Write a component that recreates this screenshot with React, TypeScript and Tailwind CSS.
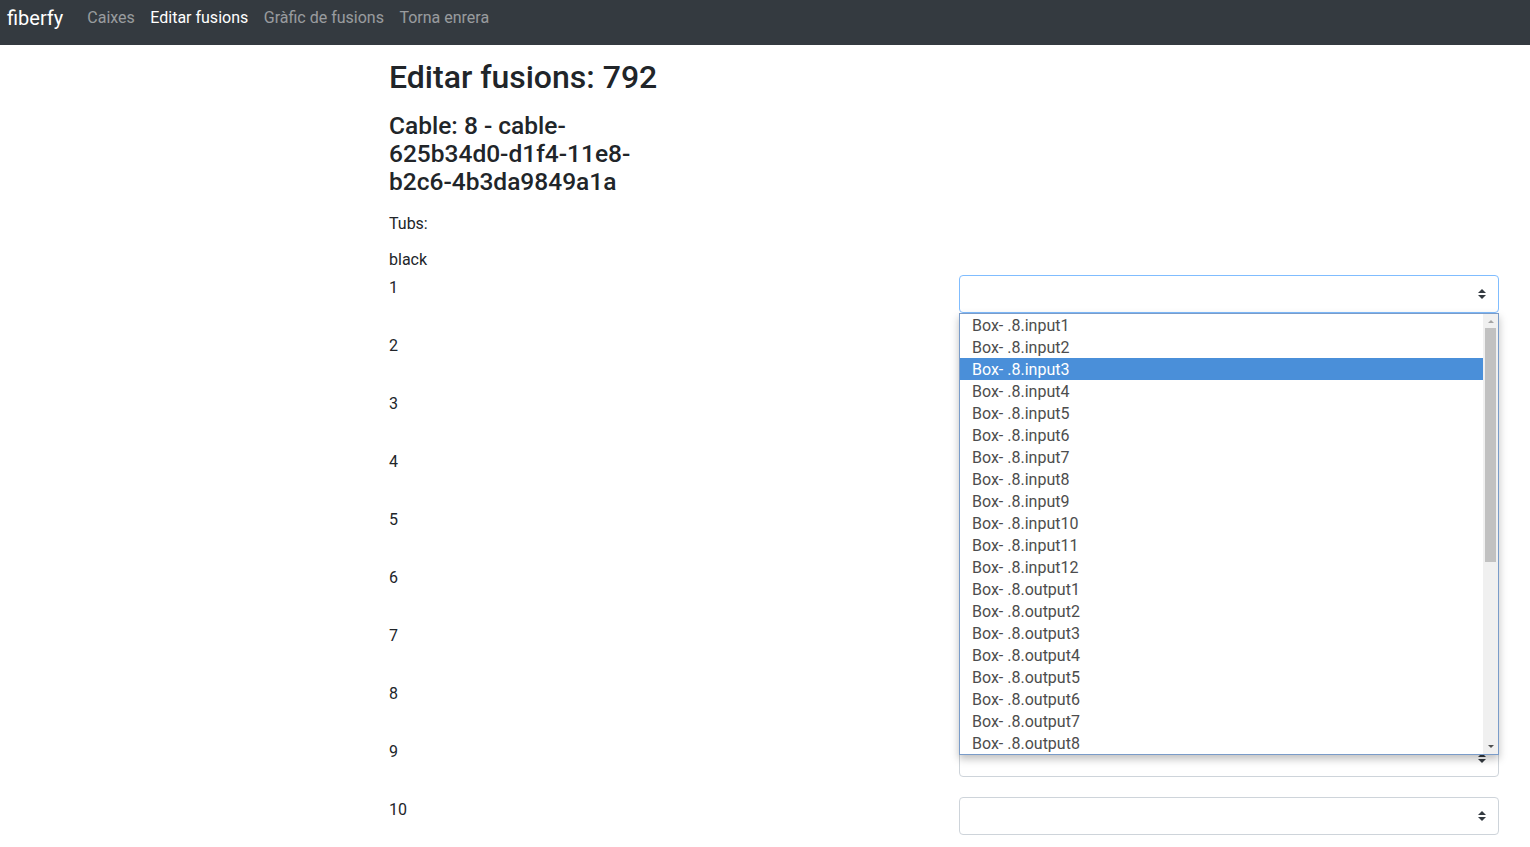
import React from 'react';

const options = [
  ...Array.from({ length: 12 }, (_, i) => `Box- .8.input${i + 1}`),
  ...Array.from({ length: 8 }, (_, i) => `Box- .8.output${i + 1}`),
];

function Caret() {
  return (
    <svg width="8" height="10" viewBox="0 0 4 5" className="shrink-0">
      <path d="M2 0L0 2h4zm0 5L0 3h4z" fill="#343a40" />
    </svg>
  );
}

function FakeSelect({ focused }: { focused?: boolean }) {
  return (
    <div
      className={
        'h-[38px] w-[540px] rounded bg-white border flex items-center justify-end pr-3 ' +
        (focused ? 'border-[#80bdff]' : 'border-[#ced4da]')
      }
    >
      <Caret />
    </div>
  );
}

function Dropdown() {
  return (
    <div className="absolute left-0 top-[38px] w-[540px] h-[442px] bg-white border border-[#7a9cc9] shadow-[0_4px_8px_rgba(0,0,0,0.25)] flex z-10">
      <div className="flex-1 flex flex-col">
        {options.map((o, i) => (
          <div
            key={o}
            className={
              'h-[22px] leading-[24px] overflow-hidden pl-3 text-base ' +
              (i === 2 ? 'bg-[#4a8fd9] text-white' : 'text-[#4d4d4d]')
            }
          >
            {o}
          </div>
        ))}
      </div>
      <div className="w-[15px] bg-[#f0f0f0] flex flex-col items-center">
        <svg width="8" height="10" viewBox="0 0 8 10" className="mt-[3px]">
          <path d="M1 6L4 3L7 6z" fill="#a3a3a3" />
        </svg>
        <div className="w-[11px] h-[234px] bg-[#c1c1c1] mt-px" />
        <div className="flex-1" />
        <svg width="8" height="10" viewBox="0 0 8 10" className="mb-[3px]">
          <path d="M1 4L4 7L7 4z" fill="#505050" />
        </svg>
      </div>
    </div>
  );
}

export default function App() {
  const rows = Array.from({ length: 10 }, (_, i) => i + 1);

  return (
    <div className="min-h-screen bg-white text-[#212529]" style={{ fontFamily: 'Roboto, "Liberation Sans", sans-serif' }}>
      <nav className="h-[45px] bg-[#343a40] flex items-center pl-[7px] overflow-hidden">
        <span className="text-white text-[20px] leading-[30px] -mt-[10px] mr-6">fiberfy</span>
        <div className="flex items-center gap-[15.5px] text-base -mt-[10px]">
          <span className="text-white/50">Caixes</span>
          <span className="text-white">Editar fusions</span>
          <span className="text-white/50">Gràfic de fusions</span>
          <span className="text-white/50">Torna enrera</span>
        </div>
      </nav>

      <main className="pl-[389px] pr-[31px] pt-[12px]">
        <h1 className="text-[32px] leading-[38px] font-medium pt-px">Editar fusions: 792</h1>
        <h4 className="w-[290px] text-[24.5px] leading-[28px] font-medium mt-[16px]">
          Cable: 8 - cable-625b34d0-d1f4-11e8-b2c6-4b3da9849a1a
        </h4>
        <p className="text-base leading-6 mt-[16px]">Tubs:</p>
        <p className="text-base leading-6 mt-3">black</p>
        <div className="mt-[3px]">
          {rows.map((n) => (
            <div key={n} className="h-[58px] flex items-start">
              <span className="flex-1 text-base leading-6 mt-px">{n}</span>
              <div className="relative">
                <FakeSelect focused={n === 1} />
                {n === 1 && <Dropdown />}
              </div>
            </div>
          ))}
        </div>
      </main>
    </div>
  );
}
